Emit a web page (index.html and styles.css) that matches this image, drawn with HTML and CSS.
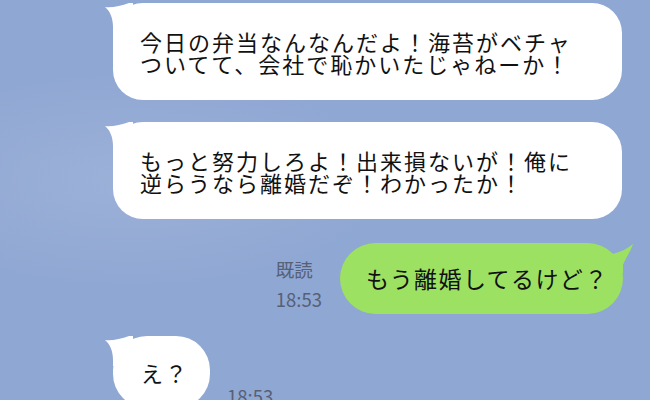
FILE: index.html
```html
<!DOCTYPE html>
<html lang="ja">

<head>
    <meta charset="UTF-8" />
    <meta name="viewport" content="width=device-width, initial-scale=1.0" />
    <title>トーク</title>
    <link rel="stylesheet" href="styles.css">
</head>

<body>
    <div class="chat">
        <div class="row in">
            <div class="bubble white wide">
                <svg class="tail-left" width="30" height="32" viewBox="-10 -2 30 32"><path d="M-8 4 C-2 5 8 3 16 0 L20 0 L20 30 L0 30 L0 24 C0 15 -3 8 -8 4 Z" /></svg>
                今日の弁当なんなんだよ！海苔がベチャ<br>ついてて、会社で恥かいたじゃねーか！
            </div>
        </div>

        <div class="row in">
            <div class="bubble white wide">
                <svg class="tail-left" width="30" height="32" viewBox="-10 -2 30 32"><path d="M-8 4 C-2 5 8 3 16 0 L20 0 L20 30 L0 30 L0 24 C0 15 -3 8 -8 4 Z" /></svg>
                もっと努力しろよ！出来損ないが！俺に<br>逆らうなら離婚だぞ！わかったか！
            </div>
        </div>

        <div class="row out">
            <div class="meta">
                <span>既読</span>
                <span>18:53</span>
            </div>
            <div class="bubble green">
                <svg class="tail-right" width="30" height="32" viewBox="-20 -2 30 32"><path d="M10 1 C4 6 -4 10 -16 12 L-16 30 L0 30 L0 22 C3 14 8 8 10 1 Z" /></svg>
                もう離婚してるけど？
            </div>
        </div>

        <div class="row in">
            <div class="bubble white short">
                <svg class="tail-left" width="30" height="32" viewBox="-10 -2 30 32"><path d="M-8 4 C-2 5 8 3 16 0 L20 0 L20 30 L0 30 L0 24 C0 15 -3 8 -8 4 Z" /></svg>
                え？
            </div>
            <div class="meta">
                <span>18:53</span>
            </div>
        </div>
    </div>
</body>

</html>
```

FILE: styles.css
```css
:root {
    --bg: #8fa7d3;
    --bubble: #ffffff;
    --green: #9de163;
    --meta: #566076;
}

body {
    margin: 0;
    background: radial-gradient(ellipse at 20% 45%, #9cb1d8 0%, rgba(156, 177, 216, 0) 35%), var(--bg);
    font-family: "Noto Sans CJK JP", "Noto Sans", sans-serif;
    color: #111;
    overflow: hidden;
    height: 400px;
}

.chat {
    display: flex;
    flex-direction: column;
    padding-top: 3px;
}

.row {
    display: flex;
    align-items: flex-end;
    margin-bottom: 22px;
}

.row.in {
    padding-left: 113px;
}

.row.out {
    justify-content: flex-end;
    padding-right: 27px;
    margin-top: 2px;
}

.bubble {
    position: relative;
    box-sizing: border-box;
    font-size: 22px;
    letter-spacing: 2px;
    line-height: 22px;
    white-space: nowrap;
}

.bubble.white {
    background: var(--bubble);
    border-radius: 30px;
}

.bubble.wide {
    width: 509px;
    padding: 27px 20px 26px 27px;
}

.bubble.short {
    width: 97px;
    height: 72px;
    padding: 25px 0 0 28px;
    border-radius: 34px;
}

.bubble.green {
    background: var(--green);
    width: 283px;
    height: 71px;
    border-radius: 36px;
    padding: 24px 0 0 26px;
    font-size: 23px;
    letter-spacing: 1.4px;
}

.tail-left {
    position: absolute;
    left: -10px;
    top: -2px;
    fill: var(--bubble);
}

.tail-right {
    position: absolute;
    right: -10px;
    top: -2px;
    fill: var(--green);
}

.meta {
    display: flex;
    flex-direction: column;
    color: var(--meta);
    font-size: 18.5px;
    line-height: 30px;
    margin-right: 18px;
}

.row.in .meta {
    margin: 0 0 -3px 17px;
}
```
